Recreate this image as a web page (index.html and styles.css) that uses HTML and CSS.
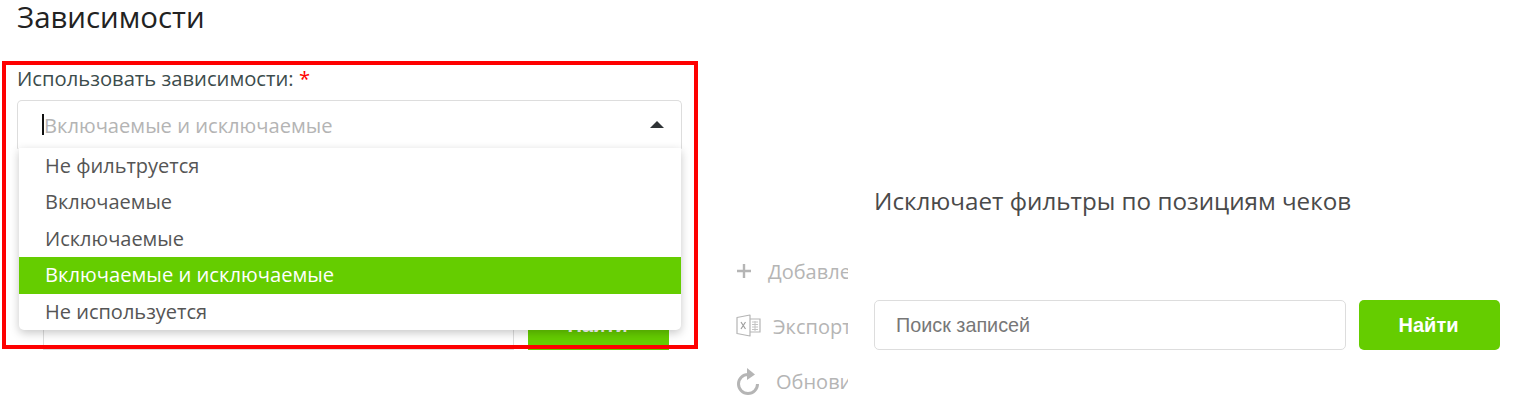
FILE: index.html
```html
<!DOCTYPE html>
<html lang="ru">
  <head>
    <meta charset="UTF-8" />
    <meta name="viewport" content="width=device-width, initial-scale=1.0" />
    <title>Зависимости</title>
    <link rel="stylesheet" href="styles.css">
  </head>
  <body>
    <div class="page">
      <div class="left-col">
        <h1 class="title">Зависимости</h1>

        <div class="form-area">
          <div class="field">
            <label class="field-label">Использовать зависимости: <span class="required">*</span></label>

            <div class="select-box">
              <span class="caret"></span>
              <span class="select-placeholder">Включаемые и исключаемые</span>
              <span class="select-arrow"></span>
            </div>

            <!-- Dropdown lies over the search row -->
            <ul class="select-menu">
              <li>Не фильтруется</li>
              <li>Включаемые</li>
              <li>Исключаемые</li>
              <li class="active">Включаемые и исключаемые</li>
              <li>Не используется</li>
            </ul>
          </div>

          <div class="search-row back-row">
            <div class="search-input"></div>
            <button class="search-btn">Найти</button>
          </div>

          <div class="red-frame"></div>
        </div>
      </div>

      <!-- Clipped toolbar -->
      <ul class="tools">
        <li>
          <svg class="tool-icon" width="16" height="16" viewBox="0 0 16 16">
            <path d="M8 1v14M1 8h14" stroke="#b5b5b5" stroke-width="2.4" fill="none" />
          </svg>
          <span>Добавление</span>
        </li>
        <li class="tool-export">
          <svg class="tool-icon" width="25" height="24" viewBox="0 0 25 24">
            <path d="M1 3.5 14 1v21L1 19.5z" fill="#fff" stroke="#b5b5b5" stroke-width="1.2" stroke-linejoin="round" />
            <path d="M14 5h10v13H14" fill="none" stroke="#b5b5b5" stroke-width="1.2" />
            <path d="M5 8l4.500 7M9.500 8 5 15" stroke="#a0a0a0" stroke-width="1.200" fill="none" />
            <path d="M16 8h6M16 10.500h6M16 13h6M16 15.500h6M19 7v10" stroke="#c4c4c4" stroke-width="1" fill="none" />
          </svg>
          <span>Экспорт</span>
        </li>
        <li class="tool-refresh">
          <svg class="tool-icon" width="24" height="28" viewBox="0 0 24 28">
            <path d="M12 7.500a9.500 9.500 0 1 0 9.500 9.500" stroke="#b5b5b5" stroke-width="3" fill="none" />
            <path d="M11 1l8 6.500-8 5.500z" fill="#b5b5b5" />
          </svg>
          <span>Обновить</span>
        </li>
      </ul>

      <div class="right-col">
        <p class="hint">Исключает фильтры по позициям чеков</p>
        <div class="search-row">
          <input class="search-input" type="text" placeholder="Поиск записей" />
          <button class="search-btn">Найти</button>
        </div>
      </div>
    </div>
  </body>
</html>
```

FILE: styles.css
```css
html,
body {
  height: 100%;
}

body {
  font-family: "Open Sans", sans-serif;
  margin: 0;
  background-color: #fff;
  overflow: hidden;
}

.page {
  display: flex;
  height: 401px;
}

.left-col {
  width: 698px;
  flex-shrink: 0;
}

.title {
  margin: 0;
  padding: 0 0 0 17px;
  height: 61px;
  font-size: 29.4px;
  line-height: 35px;
  font-weight: 400;
  color: #222;
}

.form-area {
  position: relative;
  height: 288px;
}

.red-frame {
  position: absolute;
  top: 0;
  left: 2px;
  width: 696px;
  height: 288px;
  box-sizing: border-box;
  border: 4px solid #fe0000;
  pointer-events: none;
}

.field {
  position: relative;
  z-index: 2;
  padding: 5px 0 0 17px;
  width: 665px;
}

.field-label {
  display: block;
  height: 34px;
  font-size: 20.2px;
  line-height: 24px;
  color: #3c4c4c;
}

.required {
  color: #f00;
}

.select-box {
  box-sizing: border-box;
  height: 49px;
  padding: 0 24px;
  border: 1px solid #ddd;
  border-bottom-color: #f4f4f4;
  border-radius: 5px 5px 0 0;
  display: flex;
  align-items: center;
  position: relative;
  background: #fff;
}

.caret {
  width: 2px;
  height: 21px;
  background: #111;
}

.select-placeholder {
  font-size: 20.15px;
  color: #b4b4b4;
}

.select-arrow {
  position: absolute;
  right: 17px;
  top: 20px;
  width: 0;
  height: 0;
  border-left: 7px solid transparent;
  border-right: 7px solid transparent;
  border-bottom: 7px solid #2f3336;
}

.select-menu {
  list-style: none;
  margin: 0;
  padding: 0;
  position: absolute;
  top: 87px;
  left: 19px;
  width: 662px;
  background: #fff;
  border-radius: 0 0 5px 5px;
  box-shadow: 0 3px 10px rgba(0, 0, 0, 0.22);
}

.select-menu li {
  height: 36.4px;
  line-height: 35px;
  padding-left: 26px;
  font-size: 20px;
  color: #555;
}

.select-menu li.active {
  background: #65cd00;
  color: #fff;
  font-size: 20.2px;
  font-weight: 500;
}

.search-row {
  display: flex;
  gap: 13px;
  height: 50px;
}

.back-row {
  position: absolute;
  top: 239px;
  left: 43px;
  gap: 14px;
}

.back-row .search-input {
  width: 471px;
  border-radius: 0;
}

.back-row .search-btn {
  width: 141px;
  border-radius: 0;
}

.search-input {
  box-sizing: border-box;
  width: 472px;
  height: 50px;
  padding: 0 21px;
  border: 1px solid #ddd;
  border-radius: 5px;
  font-family: "Liberation Sans", sans-serif;
  font-size: 19.8px;
  color: #333;
  outline: none;
}

.search-input::placeholder {
  color: #777;
  opacity: 1;
}

.search-btn {
  width: 141px;
  height: 50px;
  background: #65cd00;
  color: #fff;
  border: none;
  border-radius: 5px;
  font-family: "Liberation Sans", sans-serif;
  font-size: 20px;
  font-weight: 700;
  padding: 0 2px 0 0;
}

.tools {
  list-style: none;
  margin: 253px 0 0;
  padding: 0 0 0 38px;
  width: 112px;
  flex-shrink: 0;
  overflow: hidden;
}

.tools li {
  display: flex;
  align-items: center;
  height: 36px;
  margin-bottom: 19px;
  gap: 16px;
  white-space: nowrap;
  font-size: 20px;
  color: #b5b5b5;
}

.tools .tool-export {
  gap: 12px;
}

.tools .tool-refresh {
  gap: 16px;
}

.tool-icon {
  flex-shrink: 0;
}

.right-col {
  padding-left: 26px;
}

.hint {
  margin: 182px 0 81px;
  height: 37px;
  line-height: 37px;
  font-size: 24.2px;
  color: #4a4a4a;
  white-space: nowrap;
}
```
